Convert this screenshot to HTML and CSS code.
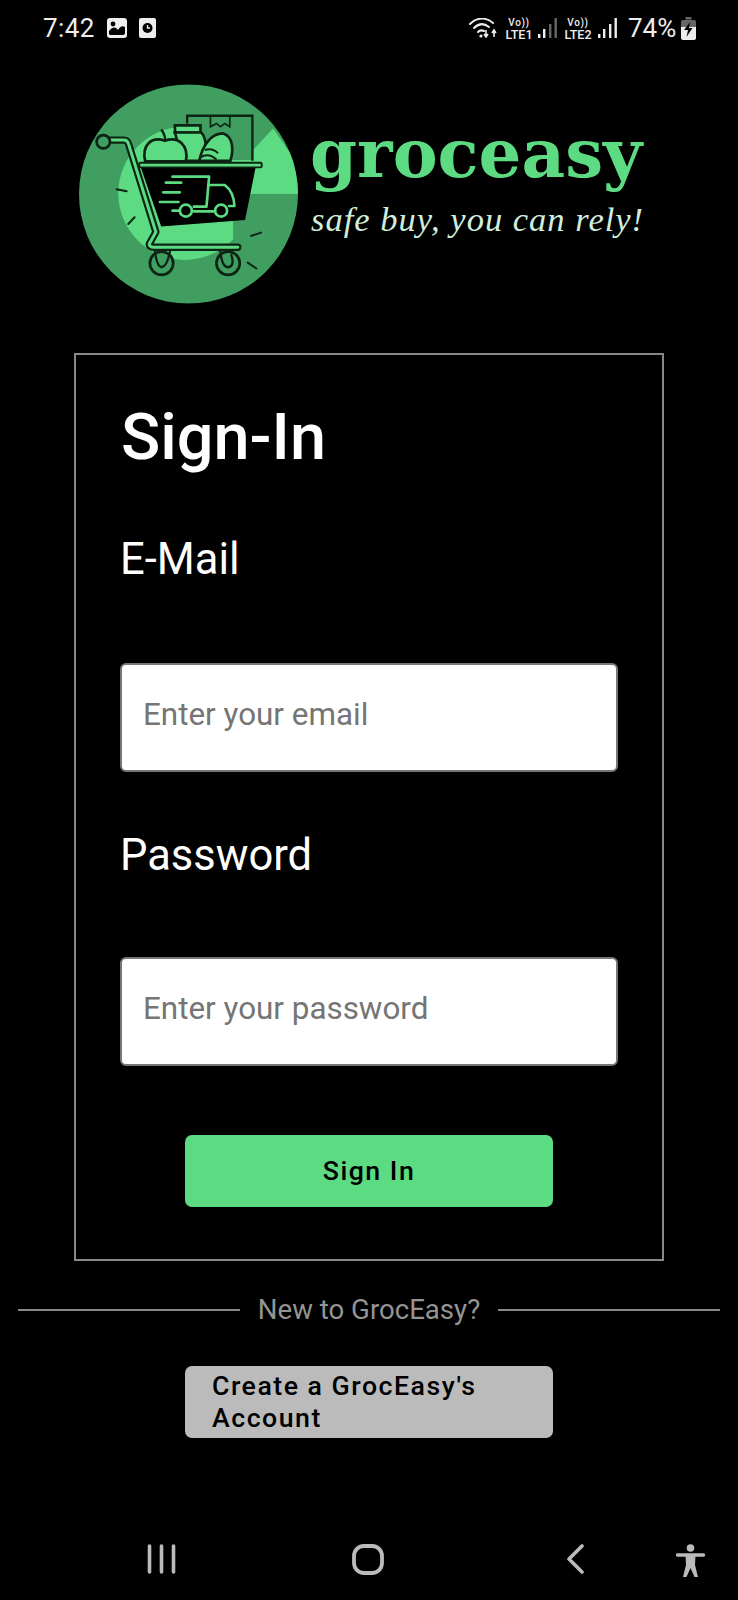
FILE: index.html
```html
<!DOCTYPE html>
<html lang="en">
<head>
<meta charset="utf-8">
<title>GrocEasy Sign-In</title>
<link rel="stylesheet" href="styles.css">
</head>
<body>
<div class="screen">
  <div class="status">
    <span class="time">7:42</span>
    <svg class="st-photo" viewBox="0 0 20 20"><rect width="20" height="20" rx="3" fill="#eee"/><circle cx="6" cy="6" r="2.4" fill="#000"/><path d="M2 16 L2 13 C6 8 9 9 11 12 C13 9 15 7 18 9 L18 15 Q18 17 16 17 L3 17 Z" fill="#000"/></svg>
    <svg class="st-clock" viewBox="0 0 17 20"><rect width="17" height="20" rx="2" fill="#eee"/><circle cx="8.5" cy="10" r="5" fill="#000"/><path d="M8.5 7 V10 H11" stroke="#eee" stroke-width="1.3" fill="none"/></svg>
    <div class="status-right">
      <svg class="st-wifi" viewBox="0 0 28 20"><g fill="none" stroke="#eee" stroke-width="2" stroke-linecap="round"><path d="M1 6 C8 -1 17 -1 24 5"/><path d="M5 10 C10 5 15 5 20 9"/><path d="M9 14 C11 12 13 12 15 13"/></g><circle cx="12" cy="18" r="1.6" fill="#eee"/><path d="M17 12 V18 M15 16 L17 19 L19 16" stroke="#eee" stroke-width="1.6" fill="none"/><path d="M25 19 V12 M23 15 L25 12 L27 15" stroke="#eee" stroke-width="1.6" fill="none"/></svg>
      <div class="volte volte-first"><span class="volte-vo">Vo))</span><span>LTE1</span></div>
      <svg class="st-bars" viewBox="0 0 19 20"><rect x="0" y="16" width="2.4" height="4" fill="#eee"/><rect x="5" y="11" width="2.4" height="9" fill="#eee"/><rect x="11" y="6" width="2.4" height="14" fill="#666"/><rect x="16.5" y="0" width="2.4" height="20" fill="#666"/></svg>
      <div class="volte volte-second"><span class="volte-vo">Vo))</span><span>LTE2</span></div>
      <svg class="st-bars st-bars-second" viewBox="0 0 19 20"><rect x="0" y="16" width="2.4" height="4" fill="#eee"/><rect x="5" y="11" width="2.4" height="9" fill="#eee"/><rect x="11" y="6" width="2.4" height="14" fill="#eee"/><rect x="16.5" y="0" width="2.4" height="20" fill="#eee"/></svg>
      <span class="pct">74%</span>
      <svg class="st-batt" viewBox="0 0 15 23"><rect x="4.500" y="0" width="6" height="2.500" fill="#666"/><path d="M2 3 H13 Q15 3 15 5 V10 H0 V5 Q0 3 2 3 Z" fill="#666"/><path d="M0 10 H15 V21 Q15 23 13 23 H2 Q0 23 0 21 Z" fill="#eee"/><path d="M9 5 L3 13 H7 L5.500 20 L11.500 11 H8 Z" fill="#000"/></svg>
    </div>
  </div>

  <div class="brand">
    <svg class="logo" viewBox="57 42 658 660">
      <defs><clipPath id="disc"><circle cx="386" cy="372" r="329"/></clipPath></defs>
      <g clip-path="url(#disc)">
        <rect x="57" y="42" width="658" height="660" fill="#3f9e60"/>
        <circle cx="375" cy="370" r="200" fill="#5cdb82"/>
        <path d="M640 175 L720 290 V372 H520 V240 H580 Z" fill="#5cdb82"/>
        <rect x="520" y="372" width="145" height="300" fill="#3f9e60"/>
      </g>
      <path d="M385 137 H578 V270 H385 Z" fill="#3f9e60"/>
      <path d="M382 160 V137 H578 V272" fill="none" stroke="#0d2415" stroke-width="7"/>
      <path d="M452 137 V170 L470 160 L482 170 L495 160 L510 170 V137" fill="none" stroke="#0d2415" stroke-width="5"/>
      <path d="M350 272 V205 Q345 190 345 166 H422 V185 Q445 205 436 272 Z" fill="#5cdb82" stroke="#0d2415" stroke-width="8"/>
      <path d="M340 187 H426" stroke="#0d2415" stroke-width="8"/>
      <path d="M418 272 C430 222 455 190 490 190 C520 198 522 240 512 272 Z" fill="#5cdb82" stroke="#0d2415" stroke-width="8"/>
      <path d="M422 262 C440 250 455 255 470 268 M435 240 C450 235 465 240 475 250" fill="none" stroke="#0d2415" stroke-width="6"/>
      <path d="M256 274 C244 225 275 198 315 212 C355 198 388 225 378 274 Z" fill="#5cdb82" stroke="#0d2415" stroke-width="8"/>
      <path d="M316 210 C316 195 310 186 304 178" fill="none" stroke="#0d2415" stroke-width="7"/>
      <path d="M242 290 H588 L556 450 L304 470 Z" fill="#000"/>
      <rect x="238" y="278" width="368" height="14" rx="4" fill="#5cdb82" stroke="#0d2415" stroke-width="6"/>
      <g fill="none" stroke="#5cdb82" stroke-width="8" stroke-linecap="round" stroke-linejoin="round">
        <path d="M338 320 H448 L440 410 H402"/>
        <path d="M445 345 H495 Q522 365 524 408 H508"/>
        <path d="M318 338 H364 M310 367 H360 M300 396 H356 M338 422 H356 M402 424 H462"/>
        <circle cx="378" cy="422" r="18"/>
        <circle cx="484" cy="422" r="18"/>
      </g>
      <g fill="none" stroke-linecap="round" stroke-linejoin="round">
        <path d="M150 210 H192 Q203 210 206 222 L288 486 L268 522 Q268 532 284 532 H534" stroke="#0d2415" stroke-width="22"/>
        <path d="M150 210 H192 Q203 210 206 222 L288 486 L268 522 Q268 532 284 532 H534" stroke="#5cdb82" stroke-width="9"/>
        <circle cx="130" cy="215" r="20" fill="#3f9e60" stroke="#0d2415" stroke-width="8"/>
        <circle cx="305" cy="580" r="35" fill="#3f9e60" stroke="#0d2415" stroke-width="8"/>
        <circle cx="505" cy="580" r="35" fill="#3f9e60" stroke="#0d2415" stroke-width="8"/>
        <path d="M285 545 Q292 592 305 592 Q322 590 330 545 M482 545 Q486 592 505 592 Q525 590 515 556" stroke="#0d2415" stroke-width="7"/>
        <path d="M170 358 L200 364 M205 462 L224 442 M574 498 L604 488 M564 578 L590 596" stroke="#0d2415" stroke-width="6"/>
      </g>
    </svg>
    <div class="wordmark">
      <span class="wordmark-name">groceasy</span>
      <span class="wordmark-tag">safe buy, you can rely!</span>
    </div>
  </div>

  <form class="card">
    <h1 class="card-title">Sign-In</h1>
    <label class="field-label" for="email">E-Mail</label>
    <input class="field-input" id="email" type="email" placeholder="Enter your email">
    <label class="field-label field-label-next" for="password">Password</label>
    <input class="field-input field-input-next" id="password" type="password" placeholder="Enter your password">
    <button class="btn btn-primary" type="button">Sign In</button>
  </form>

  <div class="divider"><span class="divider-line"></span><span class="divider-text">New to GrocEasy?</span><span class="divider-line"></span></div>

  <button class="btn btn-secondary" type="button">Create a GrocEasy's Account</button>

  <nav class="navbar">
    <svg class="nav-recent" viewBox="0 0 29 30"><path d="M2.500 2 V28 M14.500 2 V28 M26.500 2 V28" stroke="#bbb" stroke-width="3.600" stroke-linecap="round"/></svg>
    <svg class="nav-home" viewBox="0 0 32 31"><rect x="2" y="2" width="28" height="27" rx="10" fill="none" stroke="#bbb" stroke-width="3.800"/></svg>
    <svg class="nav-back" viewBox="0 0 17 30"><path d="M15 2 L2 15 L15 28" fill="none" stroke="#bbb" stroke-width="3.600" stroke-linecap="round" stroke-linejoin="round"/></svg>
    <svg class="nav-a11y" viewBox="0 0 29 34"><circle cx="14.500" cy="4" r="3.800" fill="#bbb"/><path d="M1.500 11 H27.500" stroke="#bbb" stroke-width="3.400" stroke-linecap="round"/><path d="M9.500 11 H19.500 L19 21 L22 33 H18.500 L14.500 24 L10.500 33 H7 L10 21 Z" fill="#bbb"/></svg>
  </nav>
</div>
</body>
</html>
```
FILE: styles.css
```css
* { box-sizing: border-box; }
html, body { margin: 0; background: #000; }
.screen {
  width: 738px;
  height: 1600px;
  background: #000;
  display: flex;
  flex-direction: column;
  font-family: Roboto, "Liberation Sans", sans-serif;
  overflow: hidden;
}
.status {
  height: 56px;
  padding: 17px 42px 0 43px;
  display: flex;
  align-items: flex-start;
  color: #eee;
}
.time { font-size: 26px; line-height: 22px; letter-spacing: 0.4px; }
.st-photo { width: 20px; height: 20px; margin: 1px 0 0 12px; }
.st-clock { width: 17px; height: 20px; margin: 1px 0 0 12px; }
.status-right { margin-left: auto; display: flex; align-items: flex-start; }
.st-wifi { width: 28px; height: 20px; margin-top: 1px; }
.volte {
  width: 28px;
  margin-left: 8px;
  display: flex;
  flex-direction: column;
  align-items: center;
  font-size: 12.500px;
  line-height: 12px;
  font-weight: 500;
}
.volte-vo { font-size: 10px; letter-spacing: 0.6px; }
.volte-second { margin-left: 7px; }
.st-bars { width: 19px; height: 20px; margin: 1px 0 0 5px; }
.st-bars-second { margin-left: 6px; }
.pct { font-size: 26px; line-height: 22px; margin-left: 11px; width: 48px; }
.st-batt { width: 15px; height: 23px; margin-left: 5px; }

.brand {
  margin: 28px 0 0 79px;
  display: flex;
  align-items: flex-start;
}
.logo { width: 219px; height: 220px; flex: none; }
.wordmark {
  margin: 30px 0 0 12px;
  display: flex;
  flex-direction: column;
  font-family: "DejaVu Serif", serif;
  white-space: nowrap;
}
.wordmark-name {
  color: #5cdb82;
  font-size: 67.400px;
  font-weight: 700;
  line-height: 80px;
}
.wordmark-tag {
  color: #cfeedd;
  font-family: "Liberation Serif", serif;
  font-size: 34.500px;
  font-style: italic;
  line-height: 34px;
  letter-spacing: 1px;
  margin-left: 1px;
  margin-top: 8px;
}

.card {
  width: 590px;
  height: 908px;
  margin: 49px 0 0 74px;
  border: 2px solid #888;
  padding: 46px 44px 0;
  display: flex;
  flex-direction: column;
  align-items: flex-start;
  flex: none;
}
.card-title {
  margin: 0 0 0 1px;
  color: #fff;
  font-size: 64.800px;
  font-weight: 500;
  line-height: 72px;
}
.field-label {
  color: #fff;
  font-size: 43.500px;
  line-height: 52px;
  margin-top: 61px;
}
.field-label-next { margin-top: 58px; }
.field-input {
  width: 498px;
  height: 109px;
  margin-top: 77px;
  padding: 0 21px 6px;
  background: #fff;
  border: 2px solid #767676;
  border-radius: 6px;
  font-family: Roboto, "Liberation Sans", sans-serif;
  font-size: 31.400px;
  color: #000;
  outline: none;
}
.field-input-next { margin-top: 75px; }
.field-input::placeholder { color: #757575; opacity: 1; }
.btn {
  width: 368px;
  height: 72px;
  border: none;
  border-radius: 7px;
  color: #000;
  font-family: Roboto, "Liberation Sans", sans-serif;
  font-size: 26.700px;
  font-weight: 500;
  letter-spacing: 1.500px;
  line-height: 32px;
  flex: none;
}
.btn-primary {
  margin: 69px 0 0 65px;
  background: #5cdb82;
}
.btn-secondary {
  margin: 38px 0 0 185px;
  padding: 0 27px;
  background: #bbb;
  text-align: left;
}

.divider {
  margin-top: 31px;
  padding: 0 18px;
  display: flex;
  align-items: center;
  gap: 18px;
  height: 36px;
}
.divider-line { flex: 1; height: 2px; background: #888; }
.divider-text { color: #949494; font-size: 27.600px; line-height: 36px; white-space: nowrap; }

.navbar {
  margin-top: auto;
  height: 56px;
  flex: none;
  position: relative;
}
.navbar svg { position: absolute; }
.nav-recent { left: 147px; top: 0; width: 29px; height: 30px; }
.nav-home { left: 352px; top: 0; width: 32px; height: 31px; }
.nav-back { left: 567px; top: 0; width: 17px; height: 30px; }
.nav-a11y { left: 676px; top: 0; width: 29px; height: 34px; }
```
